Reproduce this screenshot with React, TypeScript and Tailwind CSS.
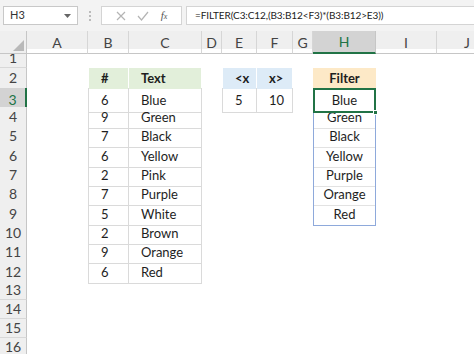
import React from 'react'

const cols = ['A', 'B', 'C', 'D', 'E', 'F', 'G', 'H', 'I', 'J']
const rowHeights = ['h-[19px]', 'h-[20px]', 'h-[19px]', 'h-[19px]', 'h-[20px]', 'h-[19px]', 'h-[19px]', 'h-[20px]', 'h-[19px]', 'h-[19px]', 'h-[20px]', 'h-[19px]', 'h-[19px]', 'h-[19px]', 'h-[19px]', 'h-[19px]']
const gridCols = 'grid grid-cols-[27px_61px_41px_73px_20px_35px_36px_20px_63px_61px_61px]'

const nums = ['6', '9', '7', '6', '2', '7', '5', '2', '9', '6']
const names = ['Blue', 'Green', 'Black', 'Yellow', 'Pink', 'Purple', 'White', 'Brown', 'Orange', 'Red']
const filtered = ['Blue', 'Green', 'Black', 'Yellow', 'Purple', 'Orange', 'Red']

type Cell = { v: string; c: string }

const cellFor = (row: number, col: string): Cell => {
    // table B2:C12
    if ((col === 'B' || col === 'C') && row >= 2 && row <= 12) {
        const left = col === 'B' ? ' border-l' : ''
        if (row === 2) return { v: col === 'B' ? '#' : 'Text', c: 'bg-[#e2efda] font-bold border-r border-white pl-3' + left }
        const v = col === 'B' ? nums[row - 3] : names[row - 3]
        return { v, c: 'border-b border-r border-[#dadada] pl-3' + left }
    }
    // table E2:F3
    if ((col === 'E' || col === 'F') && row >= 2 && row <= 3) {
        const left = col === 'E' ? ' border-l' : ''
        if (row === 2) return { v: col === 'E' ? '<x' : 'x>', c: 'bg-[#ddebf7] font-bold border-r border-white pl-3' + left }
        return { v: col === 'E' ? '5' : '10', c: 'border-b border-r border-[#dadada] pl-3' + left }
    }
    // spill H2:H9
    if (col === 'H' && row >= 2 && row <= 9) {
        if (row === 2) return { v: 'Filter', c: 'bg-[#fde9c7] font-bold justify-center' }
        if (row === 3) return { v: filtered[0], c: 'justify-center border-2 border-[#217346] relative' }
        const last = row === 9 ? ' border-b border-b-[#8ea9db]' : ' border-b border-b-[#e2e2e2]'
        return { v: filtered[row - 3], c: 'justify-center border-l border-r border-[#8ea9db]' + last }
    }
    return { v: '', c: '' }
}

const App = () => {
    const font = { fontFamily: 'Lato, "Open Sans", sans-serif' }
    return (
        <div className="w-[474px] h-[354px] overflow-hidden bg-white text-[#1e1e1e]" style={font}>
            <div className="h-[31px] bg-[#f3f3f3] flex items-center gap-0 relative">
                <div className="ml-[3px] w-[75px] h-[19px] bg-white border border-[#c8c8c8] flex items-center justify-between px-[6px] text-[11px] text-[#333]">
                    <span>H3</span>
                    <svg width="7" height="4" viewBox="0 0 7 4"><path d="M0 0h7L3.5 4z" fill="#666" /></svg>
                </div>
                <div className="w-[23px] flex flex-col items-center gap-[2px]">
                    <span className="w-[2px] h-[2px] bg-[#bbb]"></span>
                    <span className="w-[2px] h-[2px] bg-[#bbb]"></span>
                    <span className="w-[2px] h-[2px] bg-[#bbb]"></span>
                </div>
                <div className="w-[81px] h-[19px] bg-white border border-[#d4d4d4] flex items-center justify-around px-2">
                    <svg width="10" height="10" viewBox="0 0 10 10"><path d="M1 1l8 8M9 1l-8 8" stroke="#b4b4b4" strokeWidth="1.2" /></svg>
                    <svg width="12" height="10" viewBox="0 0 12 10"><path d="M1 5l3.5 4L11 1" stroke="#b4b4b4" strokeWidth="1.2" fill="none" /></svg>
                    <span className="italic text-[11px] text-[#555]" style={{ fontFamily: '"Liberation Serif", serif' }}>f<span className="text-[8px]">x</span></span>
                </div>
                <div className="ml-[4px] flex-1 h-[19px] bg-white border-l border-y border-[#d4d4d4] flex items-center pl-[8px] text-[10px] text-[#222] tracking-[-0.1px]">
                    =FILTER(C3:C12,(B3:B12&lt;F3)*(B3:B12&gt;E3))
                </div>
            </div>

            <div className={gridCols + ' h-[18px] bg-[#efefef] text-[14px] text-[#444]'}>
                <div className="relative border-r border-b border-[#c6c6c6]">
                    <svg className="absolute right-[2px] bottom-[2px]" width="11" height="11" viewBox="0 0 11 11"><path d="M11 0v11H0z" fill="#b9b9b9" /></svg>
                </div>
                {cols.map((c) => (
                    <div key={c} className={c === 'H'
                        ? 'flex items-center justify-center bg-[#d3d3d3] text-[#217346] border-r border-[#c6c6c6] border-b-2 border-b-[#217346]'
                        : 'flex items-center justify-center border-r border-[#d6d6d6] border-b border-b-[#c6c6c6]'}>
                        {c}
                    </div>
                ))}
            </div>

            {rowHeights.map((h, i) => {
                const row = i + 1
                return (
                    <div key={row} className={gridCols + ' ' + h + ' text-[13px]'}>
                        <div className={row === 3
                            ? 'flex items-center justify-center bg-[#d3d3d3] text-[#217346] border-b border-[#d0d0d0] border-r-2 border-r-[#217346] text-[14px] leading-none'
                            : 'flex items-center justify-center bg-[#efefef] text-[#444] border-b border-[#d8d8d8] border-r border-r-[#c6c6c6] text-[14px] leading-none'}>
                            {row}
                        </div>
                        {cols.map((c) => {
                            const cell = cellFor(row, c)
                            return (
                                <div key={c} className={'flex items-center pt-[1px] whitespace-nowrap ' + cell.c}>
                                    {cell.v}
                                    {row === 3 && c === 'H' && (
                                        <span className="absolute right-[-4px] bottom-[-4px] w-[5px] h-[5px] bg-[#217346] border border-white"></span>
                                    )}
                                </div>
                            )
                        })}
                    </div>
                )
            })}
        </div>
    )
}

export default App
